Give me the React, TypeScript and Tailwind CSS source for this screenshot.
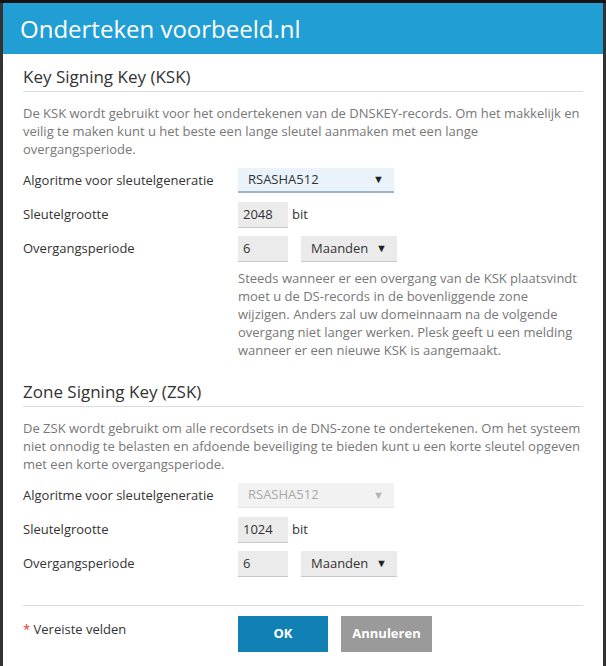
const font = { fontFamily: '"Open Sans", "Noto Sans", sans-serif' };

type SelectKind = "focus" | "plain" | "disabled";

function Select({ value, width, kind }: { value: string; width: string; kind: SelectKind }) {
  const look =
    kind === "focus"
      ? "h-[25px] bg-[#eaf3fa] text-[#333] border-b-2 border-[#9fb4c4]"
      : kind === "disabled"
        ? "h-[25px] bg-[#f2f2f2] text-[#a8a8a8] border-b border-[#e4e4e4]"
        : "h-[26px] bg-[#ebebeb] text-[#333] border-b border-[#c9c9c9]";
  return (
    <div className={`flex items-center justify-between pl-[10px] pr-[10px] text-[13px] ${width} ${look}`}>
      <span>{value}</span>
      <span className={`text-[11px] ${kind === "disabled" ? "text-[#b5b5b5]" : "text-[#222]"}`}>▼</span>
    </div>
  );
}

function Input({ value }: { value: string }) {
  return (
    <div className="flex h-[26px] w-[50px] items-center bg-[#ebebeb] border-b border-[#c9c9c9] pl-[5px] text-[13px] text-[#333]">
      {value}
    </div>
  );
}

function Row({ label, children, className = "" }: { label: string; children: React.ReactNode; className?: string }) {
  return (
    <div className={`flex items-center ${className}`}>
      <div className="w-[215px] text-[13px] text-[#333]">{label}</div>
      <div className="flex items-center">{children}</div>
    </div>
  );
}

function Section({
  title,
  desc,
  bits,
  disabled,
  help,
}: {
  title: string;
  desc: string;
  bits: string;
  disabled?: boolean;
  help?: string[];
}) {
  return (
    <div>
      <div className="border-b border-[#dcdcdc] pb-[3px] text-[17px] leading-[22px] text-[#333]">{title}</div>
      <p className="mt-[12px] text-[13px] leading-[18px] text-[#777]">{desc}</p>
      <Row label="Algoritme voor sleutelgeneratie" className="mt-[10px]">
        <Select value="RSASHA512" width="w-[156px]" kind={disabled ? "disabled" : "focus"} />
      </Row>
      <Row label="Sleutelgrootte" className="mt-[9px]">
        <Input value={bits} />
        <span className="ml-[4px] text-[13px] text-[#333]">bit</span>
      </Row>
      <Row label="Overgangsperiode" className="mt-[8px]">
        <Input value="6" />
        <div className="ml-[13px]">
          <Select value="Maanden" width="w-[96px]" kind="plain" />
        </div>
      </Row>
      {help && (
        <p className="ml-[215px] mt-[7px] text-[13px] leading-[18px] text-[#777]">
          {help.map((line, i) => (
            <span key={i} className="block whitespace-nowrap">
              {line}
            </span>
          ))}
        </p>
      )}
    </div>
  );
}

export default function App() {
  return (
    <div className="min-h-[666px] bg-[#333] border-t-[3px] border-[#141414] px-[3px]" style={font}>
      <div className="min-h-[663px] bg-white">
        <div className="flex h-[51px] items-center bg-[#219fd5] pl-[17px] text-[24px] text-white">
          Onderteken voorbeeld.nl
        </div>
        <div className="px-[20px] pt-[12px]">
          <Section
            title="Key Signing Key (KSK)"
            desc="De KSK wordt gebruikt voor het ondertekenen van de DNSKEY-records. Om het makkelijk en veilig te maken kunt u het beste een lange sleutel aanmaken met een lange overgangsperiode."
            bits="2048"
            help={[
              "Steeds wanneer er een overgang van de KSK plaatsvindt",
              "moet u de DS-records in de bovenliggende zone",
              "wijzigen. Anders zal uw domeinnaam na de volgende",
              "overgang niet langer werken. Plesk geeft u een melding",
              "wanneer er een nieuwe KSK is aangemaakt.",
            ]}
          />
          <div className="mt-[22px]">
            <Section
              title="Zone Signing Key (ZSK)"
              desc="De ZSK wordt gebruikt om alle recordsets in de DNS-zone te ondertekenen. Om het systeem niet onnodig te belasten en afdoende beveiliging te bieden kunt u een korte sleutel opgeven met een korte overgangsperiode."
              bits="1024"
              disabled
            />
          </div>
          <div className="mt-[28px] flex border-t border-[#dcdcdc] pt-[10px]">
            <div className="w-[215px] pt-[4px] text-[13px] text-[#333]">
              <span className="text-[#e0302a]">*</span> Vereiste velden
            </div>
            <button className="h-[36px] w-[90px] bg-[#1180b4] text-[13px] font-bold text-white">OK</button>
            <button className="ml-[13px] h-[36px] w-[91px] bg-[#9a9a9a] text-[13px] font-bold text-white">
              Annuleren
            </button>
          </div>
        </div>
      </div>
    </div>
  );
}
